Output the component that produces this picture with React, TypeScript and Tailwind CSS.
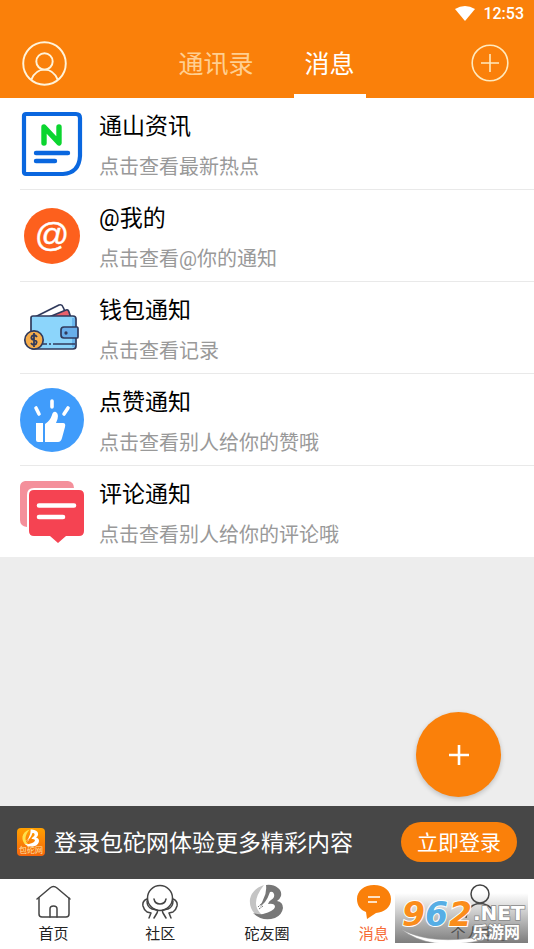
import type { ReactNode } from "react";

type Notice = {
  id: number;
  title: string;
  desc: string;
  icon: ReactNode;
};

type Tab = {
  name: string;
  icon: ReactNode;
  active?: boolean;
};

function NewsIcon() {
  return (
    <svg viewBox="0 0 64 68" className="h-[68px] w-16" fill="none" strokeLinecap="round" strokeLinejoin="round">
      <path d="M6 4H56Q60 4 60 8V46Q59 63 43 64H6Q4 64 4 62V6Q4 4 6 4Z" stroke="#0a67df" strokeWidth="4.2" />
      <path d="M24 33V17L39 33V17" stroke="#0bd52f" strokeWidth="5.4" />
      <path d="M16 43H48M16 51H35" stroke="#0a67df" strokeWidth="4.4" />
    </svg>
  );
}

function MentionIcon() {
  return (
    <span className="flex h-14 w-14 items-center justify-center rounded-full bg-[#fd601d] pb-1 font-['Liberation_Sans',sans-serif] text-[34px] leading-none text-white [-webkit-text-stroke:0.4px_white]">
      @
    </span>
  );
}

function WalletIcon() {
  return (
    <svg viewBox="0 0 64 64" className="h-16 w-16" fill="none" stroke="#303a5c" strokeWidth="1.7" strokeLinejoin="round">
      <path d="M15 21L39 9Q42 8 43 11L48 22Z" fill="#fff" />
      <path d="M29 21L46 14Q48 13 49 16L51 22Z" fill="#e8616c" />
      <path d="M13 20H53Q56 20 56 23V50Q56 53 53 53H13Q11 53 11 50V22Q11 20 13 20Z" fill="#8cd5fb" />
      <path d="M52 22H55V51H52Z" fill="#6ab6ee" stroke="none" />
      <path d="M23 48H27M29 48H31M33 48H55" />
      <path d="M44 31H57Q58 31 58 33V41Q58 42 57 42H44Q41 42 41 39V34Q41 31 44 31Z" fill="#68aeea" />
      <circle cx="46" cy="37" r="0.8" fill="#303a5c" />
      <circle cx="14" cy="44" r="9.2" fill="#f6ad4c" />
      <path d="M17 41Q15 38 12 40Q10 43 14 44Q18 45 16 48Q13 50 11 47M14 37V51" strokeWidth="1.8" />
    </svg>
  );
}

function LikeIcon() {
  return (
    <svg viewBox="0 0 64 64" className="h-16 w-16">
      <circle cx="32" cy="32" r="32" fill="#409cfb" />
      <path d="M16 20L19 26M32 13V19M48 20L44 26" stroke="#fff" strokeWidth="3.6" strokeLinecap="round" />
      <path d="M16 35H23V54H18Q16 54 16 52Z" fill="#fff" />
      <path d="M25 36Q30 33 32 27Q33 23 36 24Q40 27 36 35H43Q46 35 45 39L42 50Q41 54 38 54H25Z" fill="#fff" />
    </svg>
  );
}

function CommentIcon() {
  return (
    <svg viewBox="0 0 64 64" className="h-16 w-16">
      <path d="M5 1H48Q54 2 54 8H14Q7 8 7 15V47Q0 46 0 40V7Q0 2 5 1Z" fill="#f4909b" />
      <path d="M14 10H59Q64 10 64 15V51Q64 56 59 56H46L38 63L30 56H14Q9 56 9 51V15Q9 10 14 10Z" fill="#f54352" />
      <path d="M19 25.500H54M19 37H43" stroke="#fff" strokeWidth="4.600" strokeLinecap="round" />
    </svg>
  );
}

function LogoMark({ light, main, className }: { light: string; main: string; className: string }) {
  return (
    <svg viewBox="0 0 36 36" className={className}>
      <path d="M15 1Q3 5 1 15Q0 24 6 30Q10 32 13 31Q0 20 15 1Z" fill={light} />
      <path
        d="M17 1Q24 0 29 4Q33 7 32 12Q31 15 28 17Q34 18 34 24Q33 31 26 34Q13 38 4 29Q10 31 14 30Q25 27 26 23Q26 19 19 20Q20 17 22 16Q26 14 25 10Q24 7 21 8Q19 14 16 18L11 23L14 16Q18 9 17 1Z"
        fill={main}
      />
      <path d="M9 23L13 19M10 25L14 22" stroke={main} strokeDasharray="2 1" />
    </svg>
  );
}

function HomeIcon() {
  return (
    <svg viewBox="0 0 36 36" className="h-9 w-9" fill="none" stroke="#444" strokeWidth="1.5" strokeLinejoin="round" strokeLinecap="round">
      <path d="M4 14V30Q4 33 7 33H31Q34 33 34 30V14" />
      <path d="M2 15L15 4Q18.500 1 22 4L35 15" />
      <path d="M15 33V25Q15 22 18.500 22Q22 22 22 25V33" />
    </svg>
  );
}

function CommunityIcon() {
  return (
    <svg viewBox="0 0 36 36" className="h-9 w-9" fill="none" stroke="#444" strokeWidth="1.5" strokeLinejoin="round" strokeLinecap="round">
      <circle cx="18" cy="14" r="12.500" />
      <path d="M12 15Q13 20 18 20Q23 20 24 15" />
      <path d="M5 15Q0 17 1 22Q2 26 5 28L9 29L7 34M5 17Q5 23 10 25L15 26Q16 27 15 29L12 34" />
      <path d="M31 15Q36 17 35 22Q34 26 31 28L27 29L29 34M31 17Q31 23 26 25L21 26Q20 27 21 29L24 34" />
    </svg>
  );
}

function MessageIcon() {
  return (
    <svg viewBox="0 0 36 36" className="h-9 w-9">
      <path d="M18 1C28 1 35 7 35 15C35 24 28 28 20 29L11 35L10 28C4 26 1 21 1 15C1 7 8 1 18 1Z" fill="#fa800a" />
      <path d="M12 13H24M12 18H21" stroke="#fff" strokeWidth="1.5" />
    </svg>
  );
}

function MineIcon() {
  return (
    <svg viewBox="0 0 36 36" className="h-9 w-9" fill="none" stroke="#444" strokeWidth="1.5">
      <circle cx="17" cy="10" r="9" />
      <path d="M3 34Q5 20 17 19.500Q30 20 32 34" />
    </svg>
  );
}

const notices: Notice[] = [
  { id: 1, title: "通山资讯", desc: "点击查看最新热点", icon: <NewsIcon /> },
  { id: 2, title: "@我的", desc: "点击查看@你的通知", icon: <MentionIcon /> },
  { id: 3, title: "钱包通知", desc: "点击查看记录", icon: <WalletIcon /> },
  { id: 4, title: "点赞通知", desc: "点击查看别人给你的赞哦", icon: <LikeIcon /> },
  { id: 5, title: "评论通知", desc: "点击查看别人给你的评论哦", icon: <CommentIcon /> },
];

const tabs: Tab[] = [
  { name: "首页", icon: <HomeIcon /> },
  { name: "社区", icon: <CommunityIcon /> },
  { name: "砣友圈", icon: <LogoMark light="#c4c4c4" main="#777" className="h-9 w-9" /> },
  { name: "消息", icon: <MessageIcon />, active: true },
  { name: "个人中心", icon: <MineIcon /> },
];

function Header() {
  return (
    <header className="bg-[#fa800a] text-white">
      {/* status bar */}
      <div className="flex h-7 items-center justify-end gap-2 pr-[10px]">
        <svg viewBox="0 0 20 16" className="h-4 w-5">
          <path d="M0 3Q10 -3 20 3L10 15Z" fill="#fff" />
        </svg>
        <span className="text-base font-medium leading-7">12:53</span>
      </div>

      <div className="flex h-[70px] items-stretch justify-between pl-[22px] pr-[25px]">
        <button aria-label="我的账号" className="cursor-pointer">
          <svg viewBox="0 0 44 44" className="h-[45px] w-[45px]" fill="none" stroke="#fff3da" strokeWidth="1.9">
            <circle cx="22" cy="22" r="20.800" />
            <circle cx="22" cy="20" r="8" />
            <path d="M9 38Q13 28 22 28Q31 28 35 38" />
          </svg>
        </button>
        <div className="flex pr-[6px] pt-1 text-[25px]">
          <button className="cursor-pointer px-3 text-[#ffcf91]">通讯录</button>
          <button className="ml-7 cursor-pointer border-b-4 border-white px-[11px] pt-1">消息</button>
        </div>
        <button aria-label="添加" className="cursor-pointer">
          <svg viewBox="0 0 38 38" className="h-[38px] w-[38px]" fill="none" stroke="#ffe9bd" strokeWidth="1.6">
            <circle cx="19" cy="19" r="17.800" />
            <path d="M10 19H28M19 10V28" />
          </svg>
        </button>
      </div>
    </header>
  );
}

function NoticeRow({ notice }: { notice: Notice }) {
  return (
    <li className="group pl-5">
      <a href="#" className="flex h-[92px] border-t border-[#e9e9e9] group-first:h-[91px] group-first:border-t-0">
        <div className="flex w-16 shrink-0 items-center justify-center">{notice.icon}</div>
        <div className="pl-[15px] pt-[13px]">
          <h2 className="text-[23px] leading-8 text-black">{notice.title}</h2>
          <p className="mt-2 text-xl leading-8 text-[#999]">{notice.desc}</p>
        </div>
      </a>
    </li>
  );
}

function LoginBanner() {
  return (
    <div className="flex h-[73px] items-center bg-[#474747] px-[17px] pb-px">
      <div className="flex h-7 w-7 shrink-0 flex-col items-center rounded-[4px] bg-linear-to-b from-[#ffa000] to-[#f5650b] pt-px">
        <LogoMark light="#ffe04a" main="#fff" className="h-[18px] w-[18px]" />
        <span className="text-[8px] leading-[8px] text-[#ffe0a8]">包砣网</span>
      </div>
      <p className="ml-[9px] grow whitespace-nowrap pt-1 text-[23px] text-white">登录包砣网体验更多精彩内容</p>
      <button className="h-10 shrink-0 cursor-pointer rounded-full bg-[#fa800a] px-4 pt-1 text-[21px] text-white">
        立即登录
      </button>
    </div>
  );
}

function SiteBadge() {
  return (
    <div className="pointer-events-none absolute bottom-[6px] right-[6px] h-[50px] w-[133px] bg-linear-to-b from-white/0 to-[#666]/85">
      <svg viewBox="0 0 133 50" className="h-full w-full">
        <path d="M6 36Q35 53 91 43L88 47Q35 59 6 36Z" fill="#fff" stroke="#999" strokeWidth="0.500" />
        <g fontFamily="'DejaVu Sans', sans-serif" fontWeight="bold" fontStyle="italic" fontSize="33" stroke="#fff" strokeWidth="2" paintOrder="stroke">
          <text x="7" y="33" fill="#fb8d1c">9</text>
          <text x="30" y="33" fill="#56aee5">6</text>
          <text x="54" y="33" fill="#fb8d1c">2</text>
        </g>
        <g fill="#fff" stroke="#888" strokeWidth="1.500" paintOrder="stroke" fontWeight="bold">
          <text x="78" y="27" fontFamily="'DejaVu Sans', sans-serif" fontSize="20">.NET</text>
          <text x="77" y="45" fontFamily="'Noto Sans CJK SC', sans-serif" fontSize="16">乐游网</text>
        </g>
      </svg>
    </div>
  );
}

function BottomNav() {
  return (
    <nav className="relative flex h-[70px] bg-white">
      {tabs.map((tab) => (
        <a
          key={tab.name}
          href="#"
          className={`${tab.active ? "text-[#f66a35]" : "text-[#222]"} flex flex-1 flex-col items-center pt-[5px]`}
        >
          {tab.icon}
          <span className="text-[15px] leading-7">{tab.name}</span>
        </a>
      ))}
      <SiteBadge />
    </nav>
  );
}

export default function App() {
  return (
    <div className="flex min-h-screen flex-col bg-[#ededed] font-[Roboto,'Noto_Sans_CJK_SC',sans-serif]">
      <Header />
      <main className="relative grow">
        <ul className="bg-white">
          {notices.map((notice) => (
            <NoticeRow key={notice.id} notice={notice} />
          ))}
        </ul>
        <button
          aria-label="发布"
          className="absolute bottom-[9px] right-[33px] flex h-[85px] w-[85px] cursor-pointer items-center justify-center rounded-full bg-[#fa800a] shadow-[0_2px_5px_rgba(0,0,0,0.2)]"
        >
          <svg viewBox="0 0 20 20" className="h-5 w-5">
            <path d="M0 10H20M10 0V20" stroke="#fff" strokeWidth="2.600" />
          </svg>
        </button>
      </main>
      <LoginBanner />
      <BottomNav />
    </div>
  );
}
